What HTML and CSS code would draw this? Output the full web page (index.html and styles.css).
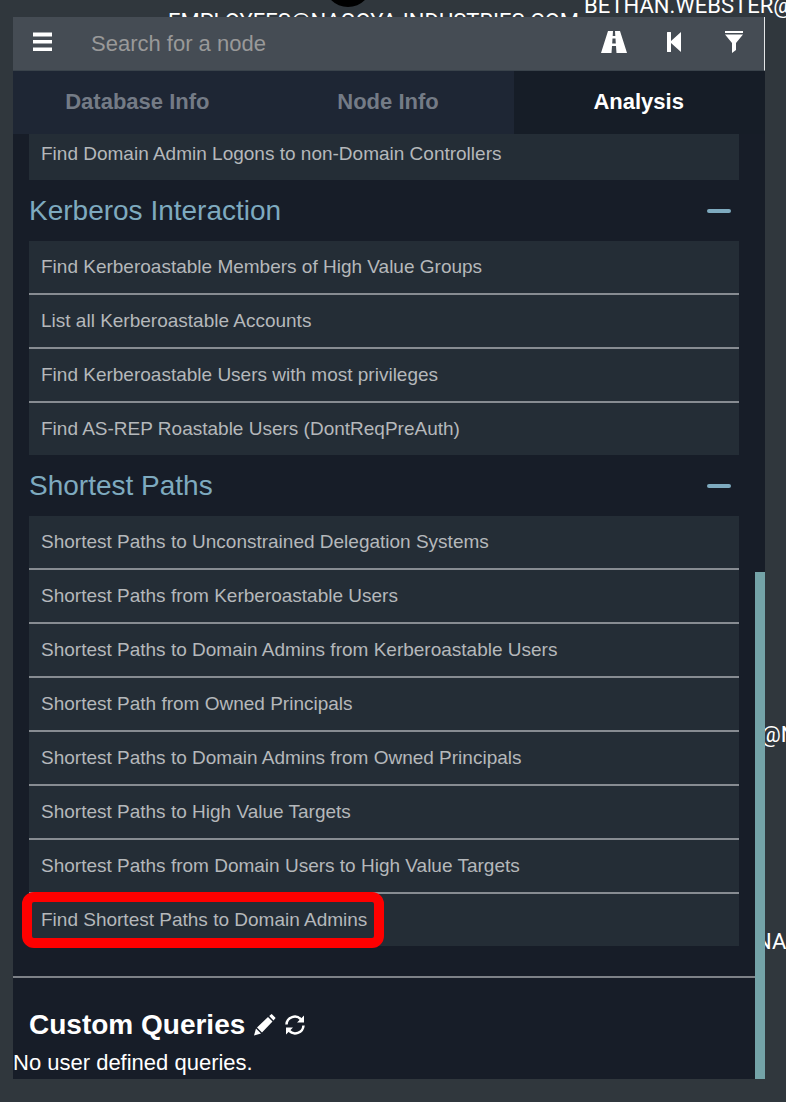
FILE: index.html
```html
<!DOCTYPE html>
<html lang="en">
<head>
  <meta charset="UTF-8">
  <meta name="viewport" content="width=device-width, initial-scale=1.0">
  <title>BloodHound</title>
  <link rel="stylesheet" href="styles.css">
</head>
<body>
<!-- graph canvas behind the panel -->
<div class="graph">
  <span class="node"></span>
  <span class="node-label label-employees">EMPLOYEES@NAGOYA-INDUSTRIES.COM</span>
  <span class="node-label label-bethan">BETHAN.WEBSTER@</span>
  <span class="node-label label-user">@N</span>
  <span class="node-label label-group">NA</span>
</div>

<div class="panel">
  <div class="searchbar">
    <button class="icon-btn menu-btn" aria-label="Menu">
      <svg width="20" height="20" viewBox="0 0 20 20"><path d="M0 0.500h19v4H0zM0 8h19v3.500H0zM0 15.500h19v3.500H0z"/></svg>
    </button>
    <input class="search" type="text" placeholder="Search for a node" aria-label="Search for a node">
    <button class="icon-btn" aria-label="Pathfinding">
      <svg width="26" height="22" viewBox="0 0 26 22"><path fill-rule="evenodd" d="M7 0h5l-.3 5h2.600L14 0h5l7 22H15.500l-.5-7h-4l-.5 7H0zM11.500 7.500l-.3 5h3.600l-.3-5z"/></svg>
    </button>
    <button class="icon-btn" aria-label="Back">
      <svg width="14" height="20" viewBox="0 0 14 20"><path d="M0 .5Q0 0 .5 0h3Q4 0 4 .5V9L14 0v20L4 11v8.500q0 .5-.5.5h-3q-.5 0-.5-.5z"/></svg>
    </button>
    <button class="icon-btn" aria-label="Filter">
      <svg width="18" height="22" viewBox="0 0 18 22"><path d="M0 0h18v2H0zM0 3.500h18L11 12v7l-4 3V12z"/></svg>
    </button>
  </div>

  <div class="tabs" role="tablist">
    <button class="tab" role="tab">Database Info</button>
    <button class="tab" role="tab">Node Info</button>
    <button class="tab active" role="tab">Analysis</button>
  </div>

  <div class="content">
    <div class="queries">
      <ul class="query-list scrolled">
        <li><button class="query">Find Domain Admin Logons to non-Domain Controllers</button></li>
      </ul>

      <h3 class="group">Kerberos Interaction <span class="minus"></span></h3>
      <ul class="query-list">
        <li><button class="query">Find Kerberoastable Members of High Value Groups</button></li>
        <li><button class="query">List all Kerberoastable Accounts</button></li>
        <li><button class="query">Find Kerberoastable Users with most privileges</button></li>
        <li><button class="query">Find AS-REP Roastable Users (DontReqPreAuth)</button></li>
      </ul>

      <h3 class="group">Shortest Paths <span class="minus"></span></h3>
      <ul class="query-list">
        <li><button class="query">Shortest Paths to Unconstrained Delegation Systems</button></li>
        <li><button class="query">Shortest Paths from Kerberoastable Users</button></li>
        <li><button class="query">Shortest Paths to Domain Admins from Kerberoastable Users</button></li>
        <li><button class="query">Shortest Path from Owned Principals</button></li>
        <li><button class="query">Shortest Paths to Domain Admins from Owned Principals</button></li>
        <li><button class="query">Shortest Paths to High Value Targets</button></li>
        <li><button class="query">Shortest Paths from Domain Users to High Value Targets</button></li>
        <li class="marked"><button class="query">Find Shortest Paths to Domain Admins</button></li>
      </ul>
    </div>

    <div class="custom">
      <h3 class="custom-title">Custom Queries
        <button class="small-btn" aria-label="Edit queries">
          <svg width="22" height="22" viewBox="0 0 22 22"><path d="M0 21.500l2-7L7 19.500zM3 13.500L14 3l4.500 4.500L8 18.500zM15.200 2L17 .4q.6-.6 1.200 0l3 3q.6.6 0 1.200L19.500 6.500z"/></svg>
        </button>
        <button class="small-btn" aria-label="Refresh queries">
          <svg width="20" height="20" viewBox="0 0 20 20"><path class="arc" d="M1.500 9.500A8.300 8.300 0 0 1 16 4.500M18.500 10.500A8.300 8.300 0 0 1 4 15.500"/><path d="M12 7.500h7V.5zM8 12.500H1v7z"/></svg>
        </button>
      </h3>
      <p class="empty">No user defined queries.</p>
    </div>
    <span class="scroll-thumb"></span>
  </div>
</div>
</body>
</html>
```
FILE: styles.css
```css
*,
*::after {
  box-sizing: border-box;
}
body {
  margin: 0;
  padding: 17px 21px 23px 13px;
  background: #30373d;
  color: #fff;
  font-family: "Liberation Sans", Arial, sans-serif;
}
button {
  margin: 0;
  padding: 0;
  border: 0;
  background: none;
  color: inherit;
  font-family: inherit;
  cursor: pointer;
}
svg {
  display: block;
  fill: #fff;
}
.arc {
  fill: none;
  stroke: #fff;
  stroke-width: 2.5;
}
.graph {
  position: absolute;
  inset: 0;
  overflow: hidden;
}
.node {
  position: absolute;
  left: 324px;
  top: -41px;
  width: 48px;
  height: 48px;
  border-radius: 50%;
  background: #000;
}
.node-label {
  position: absolute;
  font: 22px/26px Roboto, sans-serif;
  white-space: nowrap;
}
.label-employees {
  left: 168px;
  top: 9px;
}
.label-bethan {
  left: 584px;
  top: -7px;
}
.label-user {
  left: 761px;
  top: 722px;
}
.label-group {
  left: 756px;
  top: 929px;
}

.panel {
  position: relative;
  background: #171d28;
}
.searchbar {
  display: flex;
  height: 54px;
  background: #454c54;
  border-right: 1px solid #e4e6e8;
  border-bottom: 1px solid #3a434b;
}
.icon-btn {
  display: flex;
  flex: 0 0 60px;
  align-items: center;
  justify-content: center;
  padding-bottom: 4px;
}
.search {
  flex: 1;
  min-width: 0;
  padding: 0 18px;
  border: 0;
  outline: 0;
  background: none;
  color: #fff;
  font: 22px "Liberation Sans", Arial, sans-serif;
}
.search::placeholder {
  color: #999;
  opacity: 1;
}
.tabs {
  display: flex;
  background: #1e2634;
}
.tab {
  flex: 1;
  height: 63px;
  padding: 0 2px 2px 0;
  color: #747b86;
  font-size: 22px;
  font-weight: bold;
}
.tab.active {
  background: #161d27;
  color: #fff;
}

.content {
  position: relative;
  padding-right: 10px;
}
.queries {
  padding: 0 16px 30px;
}
.query-list {
  margin: 0;
  padding: 0;
  list-style: none;
}
.query-list li {
  position: relative;
  background: #242d36;
}
.query-list li + li {
  border-top: 2px solid #878c92;
}
.query {
  display: block;
  width: 100%;
  padding: 12px;
  color: #b5b8bb;
  font-size: 19px;
  line-height: 28px;
  text-align: left;
}
.scrolled .query {
  padding-top: 6px;
}
.group {
  display: flex;
  align-items: center;
  justify-content: space-between;
  height: 61px;
  margin: 0;
  padding-right: 8px;
  color: #7eaabf;
  font-size: 28px;
  font-weight: normal;
}
.minus {
  width: 24px;
  height: 4px;
  border-radius: 2px;
  background: #7eaabf;
}
.marked::after {
  content: "";
  position: absolute;
  top: -2px;
  left: -7px;
  width: 362px;
  height: 56px;
  border: 10px solid #fe0000;
  border-radius: 12px;
  pointer-events: none;
}

.custom {
  border-top: 2px solid #7d8187;
  padding-top: 29px;
}
.custom-title {
  display: flex;
  align-items: center;
  gap: 9px;
  margin: 0;
  padding-left: 16px;
  font-size: 28px;
  line-height: 36px;
}
.empty {
  margin: 0;
  padding: 6px 0 2px;
  font-size: 22px;
  line-height: 28px;
}
.scroll-thumb {
  position: absolute;
  right: 0;
  bottom: 0;
  width: 10px;
  height: 507px;
  background: #74a3a8;
}
```
